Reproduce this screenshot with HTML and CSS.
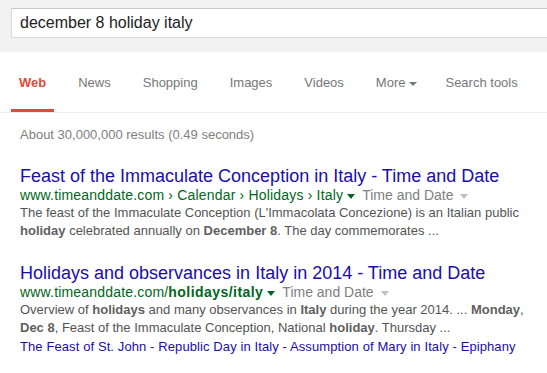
FILE: index.html
```html
<!DOCTYPE html>
<html lang="en">
<head>
    <meta charset="UTF-8">
    <title>december 8 holiday italy - Search</title>
    <link rel="stylesheet" href="styles.css">
</head>
<body>
    <div class="header">
        <div class="search-box">december 8 holiday italy</div>
    </div>

    <div class="nav">
        <a class="nav-item selected" href="#">Web</a>
        <a class="nav-item" href="#">News</a>
        <a class="nav-item" href="#">Shopping</a>
        <a class="nav-item" href="#">Images</a>
        <a class="nav-item" href="#">Videos</a>
        <a class="nav-item" href="#">More<span class="more-arrow"></span></a>
        <a class="nav-item" href="#">Search tools</a>
    </div>

    <div class="results">
        <div class="stats">About 30,000,000 results (0.49 seconds)</div>

        <div class="result">
            <a class="title" href="#">Feast of the Immaculate Conception in Italy - Time and Date</a>
            <div class="url-line">
                <cite>www.timeanddate.com › Calendar › Holidays › Italy</cite><span class="arrow green"></span><span class="source">Time and Date</span><span class="arrow gray"></span>
            </div>
            <div class="snippet">
                The feast of the Immaculate Conception (L'Immacolata Concezione) is an Italian public
                <b>holiday</b> celebrated annually on <b>December 8</b>. The day commemorates ...
            </div>
        </div>

        <div class="result">
            <a class="title" href="#">Holidays and observances in Italy in 2014 - Time and Date</a>
            <div class="url-line">
                <cite>www.timeanddate.com/<b>holidays/italy</b></cite><span class="arrow green"></span><span class="source">Time and Date</span><span class="arrow gray"></span>
            </div>
            <div class="snippet">
                Overview of <b>holidays</b> and many observances in <b>Italy</b> during the year 2014. ... <b>Monday</b>,
                <b>Dec 8</b>, Feast of the Immaculate Conception, National <b>holiday</b>. Thursday ...
            </div>
            <div class="sitelinks">
                <a href="#">The Feast of St. John</a> - <a href="#">Republic Day in Italy</a> - <a href="#">Assumption of Mary in Italy</a> - <a href="#">Epiphany</a>
            </div>
        </div>
    </div>
</body>
</html>
```

FILE: styles.css
```css
/* page */
body {
    margin: 0;
    background-color: #fff;
    font-family: "Liberation Sans", Arial, sans-serif;
    font-size: 13px;
    color: #222;
}

a {
    text-decoration: none;
}

/* top search bar */
.header {
    background-color: #f1f1f1;
    height: 52px;
    padding-top: 8px;
    padding-left: 11px;
    box-sizing: border-box;
    overflow: hidden;
}

.search-box {
    height: 30px;
    box-sizing: border-box;
    width: 600px;
    background-color: #fff;
    border: 1px solid #d9d9d9;
    border-top-color: #c8c8c8;
    padding: 0 8px;
    font-size: 16px;
    line-height: 27px;
    color: #222;
}

/* tabs */
.nav {
    display: flex;
    gap: 16px;
    padding-left: 11px;
    border-bottom: 1px solid #ebebeb;
}

.nav-item {
    display: block;
    padding: 23px 8px 18px;
    line-height: 16px;
    color: #777;
    border-bottom: 3px solid transparent;
}

.nav-item.selected {
    color: #dd4b39;
    font-weight: bold;
    border-bottom-color: #dd4b39;
}

.more-arrow {
    display: inline-block;
    margin: 0 -4px 0 4px;
    vertical-align: middle;
    border-style: solid;
    border-width: 4px 4px 0;
    border-color: #777 transparent transparent;
}

/* results */
.results {
    padding-left: 20px;
    width: 512px;
}

.stats {
    padding-top: 13px;
    line-height: 18px;
    color: #808080;
}

.result {
    margin-top: 21px;
}

.result + .result {
    margin-top: 22px;
}

.title {
    display: block;
    font-size: 18px;
    line-height: 22px;
    color: #1a0dab;
    white-space: nowrap;
}

.url-line {
    font-size: 14px;
    line-height: 17px;
    white-space: nowrap;
}

.url-line cite {
    font-style: normal;
    letter-spacing: 0.18px;
    color: #006621;
}

.url-line cite b {
    letter-spacing: 0.45px;
}

.arrow {
    display: inline-block;
    vertical-align: middle;
    margin: 0 7px 0 4px;
    border-style: solid;
    border-width: 5px 4px 0;
    border-color: transparent;
}

.arrow.green {
    border-top-color: #006621;
}

.arrow.gray {
    margin: 0 0 0 7px;
    border-top-color: #c0c0c0;
}

.source {
    color: #808080;
}

.snippet {
    line-height: 18px;
    color: #545454;
}

.snippet b {
    color: #5f5f5f;
}

.sitelinks {
    margin-top: 1px;
    line-height: 18px;
    letter-spacing: 0.1px;
    color: #1a0dab;
}

.sitelinks a {
    color: #1a0dab;
}
```
